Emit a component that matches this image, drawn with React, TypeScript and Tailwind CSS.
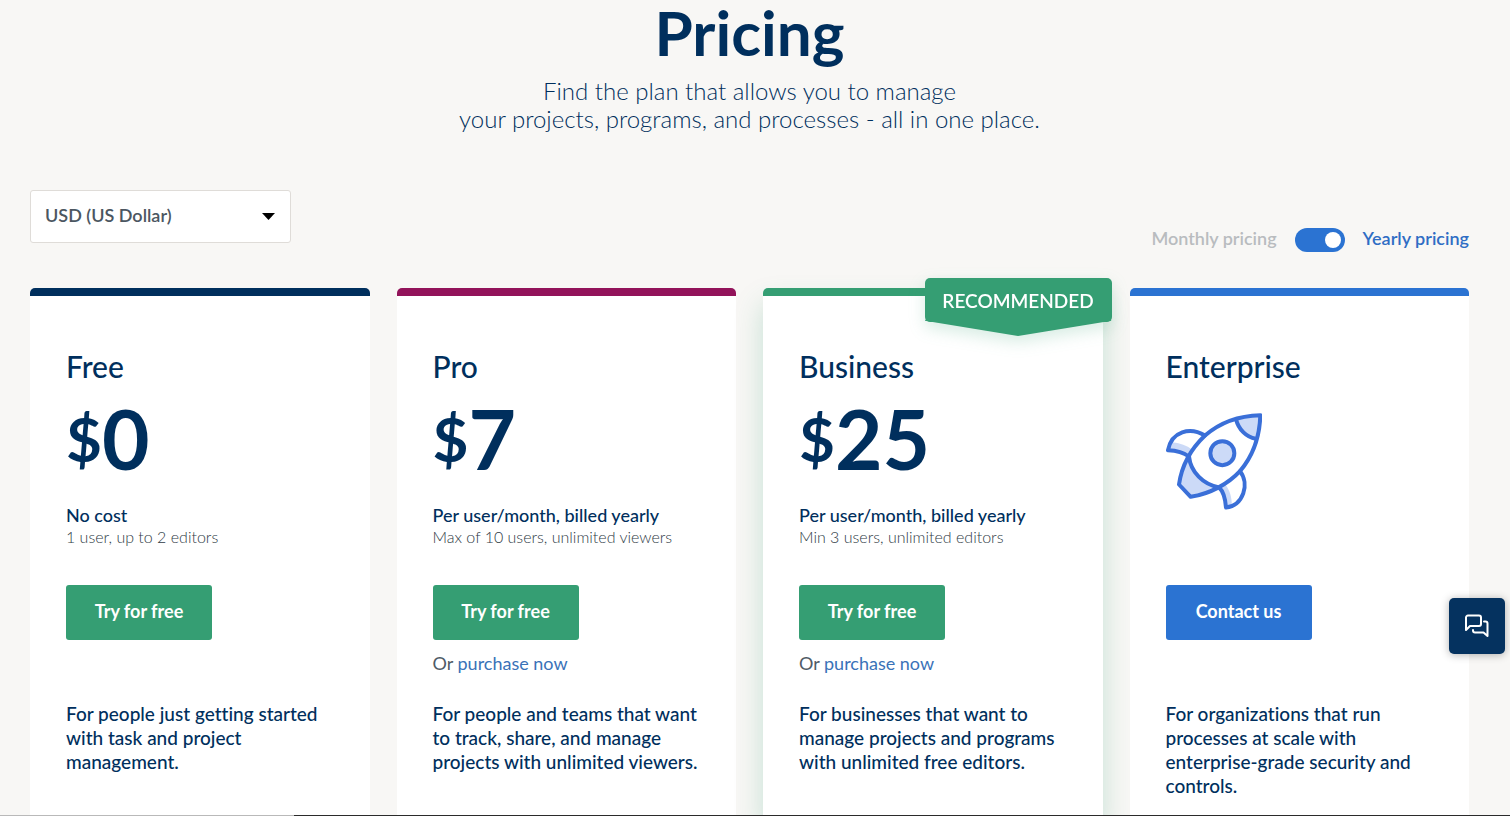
import { useState } from "react";
import clsx from "clsx";

type Plan = {
  name: string;
  amount?: string;
  billing?: string;
  limits?: string;
  cta: string;
  purchase?: boolean;
  recommended?: boolean;
  description: string;
  bar: string;
  button: string;
};

const plans: Plan[] = [
  {
    name: "Free",
    amount: "0",
    billing: "No cost",
    limits: "1 user, up to 2 editors",
    cta: "Try for free",
    description: "For people just getting started with task and project management.",
    bar: "bg-[#002f5d]",
    button: "bg-[#359e73]",
  },
  {
    name: "Pro",
    amount: "7",
    billing: "Per user/month, billed yearly",
    limits: "Max of 10 users, unlimited viewers",
    cta: "Try for free",
    purchase: true,
    description: "For people and teams that want to track, share, and manage projects with unlimited viewers.",
    bar: "bg-[#92135a]",
    button: "bg-[#359e73]",
  },
  {
    name: "Business",
    amount: "25",
    billing: "Per user/month, billed yearly",
    limits: "Min 3 users, unlimited editors",
    cta: "Try for free",
    purchase: true,
    recommended: true,
    description: "For businesses that want to manage projects and programs with unlimited free editors.",
    bar: "bg-[#359e73]",
    button: "bg-[#359e73]",
  },
  {
    name: "Enterprise",
    cta: "Contact us",
    description: "For organizations that run processes at scale with enterprise-grade security and controls.",
    bar: "bg-[#2b73d2]",
    button: "bg-[#2b73d2]",
  },
];

function Rocket() {
  return (
    <svg viewBox="48 38 288 290" className="mt-[29px] h-[97px] w-[96px]" fill="none" aria-hidden="true">
      {/* fins */}
      <path d="M54 149 C65 92 120 78 165 105 L117 168 C100 155 80 150 54 149Z" fill="#fff" />
      <path d="M54 149 C58 138 62 131 70 126 C90 128 110 134 127 148 L117 168 C100 155 80 150 54 149Z" fill="#ccdaf7" />
      <path d="M270 212 C300 250 280 315 228 321 C226 295 222 275 208 262Z" fill="#fff" />
      <path d="M208 262 L226 252 C240 270 245 290 246 315 L228 321 C226 295 222 275 208 262Z" fill="#ccdaf7" />
      <g stroke="#3a6fd8" strokeWidth="12" strokeLinejoin="round" strokeLinecap="round">
        <path d="M165 105 C120 78 65 92 54 149 C80 150 100 155 117 168" />
        <path d="M270 212 C300 250 280 315 228 321 C226 295 222 275 208 262" />
      </g>
      {/* body */}
      <path d="M117 168 C122 215 160 252 205 260 C180 274 150 284 122 289 L87 252 C91 222 102 194 117 168Z" fill="#ccdaf7" />
      <path d="M331 44 C305 45 280 48 258 56 C266 88 290 110 317 115 C326 92 330 68 331 44Z" fill="#ccdaf7" />
      <circle cx="217" cy="158" r="36" fill="#ccdaf7" />
      <g stroke="#3a6fd8" strokeWidth="12" strokeLinejoin="round">
        <path d="M331 44 C258 46 205 70 165 105 C125 143 95 195 87 252 L122 289 C180 280 235 250 270 212 C310 165 329 110 331 44Z" />
        <path d="M258 56 C266 88 290 110 317 115" />
        <path d="M117 168 C122 215 160 252 205 260" />
        <circle cx="217" cy="158" r="36" />
      </g>
    </svg>
  );
}

function RecommendedBadge() {
  return (
    <div className="absolute -top-[10px] -right-[9px] w-[187px] drop-shadow-[0_6px_8px_rgba(53,158,115,0.2)]">
      <div className="flex h-11 items-center justify-center rounded-[5px] bg-[#359e73] pt-[2px] text-[19px] font-semibold text-white">
        RECOMMENDED
      </div>
      <div className="-mt-[3px] h-[17px] bg-[#359e73] [clip-path:polygon(1%_0,99%_0,100%_10%,50%_100%,0_10%)]" />
    </div>
  );
}

function PlanCard({ plan }: { plan: Plan }) {
  return (
    <article
      className={clsx(
        "relative flex flex-col rounded-t-[5px] bg-white",
        plan.recommended && "shadow-[0_16px_28px_rgba(53,158,115,0.25)]"
      )}
    >
      <div className={clsx("h-2 rounded-t-[5px]", plan.bar)} />
      {plan.recommended && <RecommendedBadge />}
      <div className="flex flex-col items-start px-9 pt-[52px] pb-4">
        <h2 className="text-[30px] leading-9 font-medium">{plan.name}</h2>
        <div className="h-[118px]">
          {plan.amount ? (
            <p className="flex items-center pt-[6px] text-[82px] leading-[96px] font-bold">
              <span className="text-[62px]">$</span>
              {plan.amount}
            </p>
          ) : (
            <Rocket />
          )}
        </div>
        <div className="h-[83px] pt-px">
          {plan.billing && <p className="text-[18px] leading-6 font-medium">{plan.billing}</p>}
          {plan.limits && <p className="text-[16px] leading-5 font-light text-[#2f3b46]">{plan.limits}</p>}
        </div>
        <button
          type="button"
          className={clsx("h-[55px] w-[146px] rounded-[3px] pb-[2px] text-[18px] font-bold text-white", plan.button)}
        >
          {plan.cta}
        </button>
        <p className="h-[62px] pt-[11px] text-[18px] leading-6 text-[#4f5b66]">
          {plan.purchase && (
            <>
              Or{" "}
              <a href="#purchase" className="text-[#3a72b8]">
                purchase now
              </a>
            </>
          )}
        </p>
        <p className="text-[19px] leading-6 font-medium">{plan.description}</p>
      </div>
    </article>
  );
}

export default function App() {
  const [yearly, setYearly] = useState(true);

  return (
    <div className="flex min-h-screen flex-col bg-[#f8f7f5] pr-[11px] font-['Lato',sans-serif] text-[#002f5d] [font-variant-ligatures:none]">
      <header className="text-center">
        <h1 className="text-[62px] leading-[64px] font-bold">Pricing</h1>
        <p className="mt-[13px] text-[24px] leading-7 font-light">
          Find the plan that allows you to manage
          <br />
          your projects, programs, and processes - all in one place.
        </p>
      </header>

      <main className="flex flex-1 flex-col px-[30px] pt-[57px]">
        <div className="flex items-start justify-between">
          <div className="relative">
            <select
              aria-label="Currency"
              className="h-[53px] w-[261px] appearance-none rounded-[3px] border border-[#dfdcd8] bg-white px-[14px] pb-[2px] text-[18px] font-semibold text-[#4b5661]"
            >
              <option>USD (US Dollar)</option>
            </select>
            <svg viewBox="0 0 13 7" className="pointer-events-none absolute top-[23px] right-4 h-[7px] w-[13px]" aria-hidden="true">
              <path d="M0 0H13L6.5 7Z" fill="#000" />
            </svg>
          </div>

          <div className="flex items-center pt-9 text-[18px] leading-6 font-semibold">
            <span className={clsx("pb-1", yearly ? "text-[#b9bcbf]" : "text-[#2f6dc4]")}>Monthly pricing</span>
            <input
              type="checkbox"
              role="switch"
              aria-label="Yearly pricing"
              checked={yearly}
              onChange={(e) => setYearly(e.target.checked)}
              className="mx-[18px] flex h-6 w-[50px] appearance-none items-center rounded-full bg-[#2b73d2] px-1 before:size-4 before:rounded-full before:bg-white checked:justify-end"
            />
            <span className={clsx("pb-1", yearly ? "text-[#2f6dc4]" : "text-[#b9bcbf]")}>Yearly pricing</span>
          </div>
        </div>

        <div className="mt-[34px] grid flex-1 grid-cols-4 gap-[27px]">
          {plans.map((plan) => (
            <PlanCard key={plan.name} plan={plan} />
          ))}
        </div>
      </main>

      <button
        type="button"
        aria-label="Open chat"
        className="fixed right-[5px] bottom-[162px] flex size-14 items-center justify-center rounded-[5px] bg-[#05325f] shadow-[0_1px_8px_rgba(0,0,0,0.3)]"
      >
        <svg viewBox="0 0 24 24" className="size-6" fill="none" stroke="#fff" strokeWidth="2" strokeLinejoin="round" strokeLinecap="round" aria-hidden="true">
          <path d="M1 16V3.5a2 2 0 0 1 2-2H14a2 2 0 0 1 2 2V10a2 2 0 0 1-2 2H5Z" />
          <path d="M19 7.5h1.500a2 2 0 0 1 2 2V22L18.500 18.500H10a2 2 0 0 1-2-2V16" />
        </svg>
      </button>

      <div className="fixed inset-x-0 bottom-0 flex h-px bg-[#2b2b2b]">
        <div className="w-[294px] bg-[#b9b9b9]" />
      </div>
    </div>
  );
}
